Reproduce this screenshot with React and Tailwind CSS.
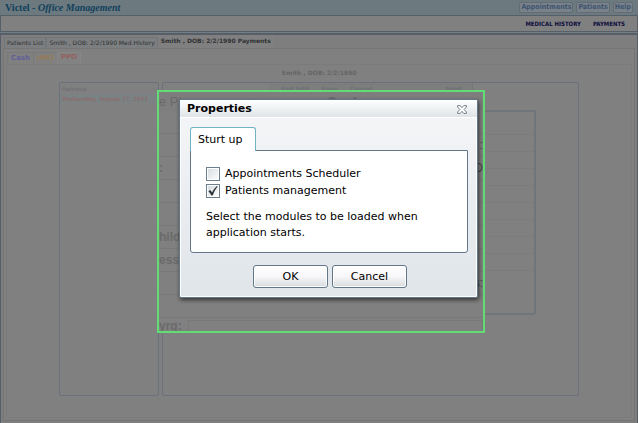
import { useState } from 'react';

const TOP_LINKS = ['Appointments', 'Patients', 'Help'];

const TABS = ['Patients List', 'Smith , DOB: 2/2/1990 Med.History'];

const FORM_ROWS = [
  { id: 1, left: '', right: '' },
  { id: 2, left: '', right: ':' },
  { id: 3, left: ':', right: 'D' },
  { id: 4, left: '', right: '' },
  { id: 5, left: '', right: '' },
  { id: 6, left: 'hild', right: '' },
  { id: 7, left: 'ess:', right: '' },
  { id: 8, left: '', right: 's:' },
  { id: 9, left: '', right: '' },
];

function Header() {
  return (
    <header className="font-['DejaVu_Sans_Condensed','DejaVu_Sans',sans-serif]">
      <div className="flex h-[15px] items-center justify-between bg-[#6c797f] px-[5px]">
        <h1 className="font-['Liberation_Serif',serif] text-[10px] leading-none font-bold text-[#103f5c]">
          Victel - <em>Office Management</em>
        </h1>
        <nav className="flex gap-[3px]">
          {TOP_LINKS.map(label => (
            <a
              key={label}
              href="#"
              className="rounded-xs border border-[#626c76] bg-[#788288] px-px text-[7px] leading-[9px] font-bold text-[#3f5472]"
            >
              {label}
            </a>
          ))}
        </nav>
      </div>
      <nav className="flex h-[17px] items-center justify-end gap-3 border border-[#545f69] bg-[#808080] pr-3 text-[6px] font-bold text-[#0c0c3c]">
        <a href="#">MEDICAL HISTORY</a>
        <a href="#">PAYMENTS</a>
      </nav>
    </header>
  );
}

function VisitList() {
  return (
    <section className="w-[100px] rounded-xs border border-[#6a717d] text-[6px] leading-none">
      <div className="flex h-[11px] items-center justify-between px-0.5 text-[#6b6c6f]">
        <button>Remove</button>
        <span className="text-[#70757d]">::</span>
      </div>
      <div className="flex h-[9px] items-center overflow-hidden bg-[#7a8284] px-0.5 font-['DejaVu_Serif_Condensed','DejaVu_Serif',serif] font-bold whitespace-nowrap text-[#8e6b6d]">
        Wednesday, August 17, 2011
      </div>
    </section>
  );
}

function PaymentForm() {
  return (
    <section className="flex-1 rounded-xs border border-[#6a717d] pr-[42px]">
      <div className="mr-[63px] ml-[106px] flex h-[12px] items-center gap-3 border-r border-[#767676] bg-[#7d7d7d] pl-3 text-[6px] leading-none font-semibold text-[#6c7176]">
        <button>End Edit</button>
        <button>Save</button>
        <button>Cancel</button>
        <button className="mr-2.5 ml-auto">Print</button>
      </div>
      <div className="mt-[15px] ml-[42px] h-[205px] rounded-xs border-2 border-[#70747b] pt-[22px]">
        {FORM_ROWS.map(row => (
          <div key={row.id} className="h-[17px] border-t border-[#7c7c7c]" />
        ))}
      </div>
    </section>
  );
}

function Workspace() {
  return (
    <main className="mt-px flex grow flex-col border-x border-t-2 border-[#545f69] bg-[#7e7e7e] px-0.5 pb-0.5">
      <div className="flex h-[13px] items-stretch pl-px text-[6px] leading-none text-[#2f3234]">
        {TABS.map(tab => (
          <button key={tab} className="mt-0.5 border-x border-t border-[#727679] bg-[#7c7e80] px-0.5 whitespace-nowrap">
            {tab}
          </button>
        ))}
        <button className="bg-[#808080] px-[3px] pb-0.5 font-bold whitespace-nowrap text-[#303234]">
          Smith , DOB: 2/2/1990 Payments
        </button>
      </div>
      <div className="flex grow flex-col border border-[#757575] bg-[#808080] px-0.5 pt-[3px] pb-0.5">
        <div className="flex h-[12px] pl-px text-[7px] leading-none font-bold">
          <button className="border border-b-0 border-[#797979] px-[3px] text-[#5f5f98]">Cash</button>
          <button className="border-t border-[#797979] px-[3px] font-normal text-[#a07840]">HMO</button>
          <button className="border border-b-0 border-[#868686] bg-[#828282] px-[3px] pb-0.5 text-[#94605f]">PPO</button>
        </div>
        <div className="flex grow flex-col border border-[#7b7b7b]">
          <h2 className="pt-1 text-center text-[6px] leading-[8px] font-bold text-[#656565]">
            Smith , DOB: 2/2/1990
          </h2>
          <div className="mx-[52px] mt-[5px] mb-[21px] flex grow gap-[3px]">
            <VisitList />
            <PaymentForm />
          </div>
        </div>
      </div>
    </main>
  );
}

// enlarged part of the form behind the dialog
function FormBackground() {
  return (
    <div className="absolute inset-0 overflow-hidden bg-[#808080] font-['Liberation_Sans',sans-serif] text-[12px] leading-none font-bold text-[#6a6a6a]">
      <div className="flex h-[19px] items-center bg-[#7e7e7e] text-[13px]">
        <span className="w-[168px] font-medium">e Ph</span>
        <span>Card</span>
      </div>
      {FORM_ROWS.map(row => (
        <div key={row.id} className="flex h-[23px] items-center justify-between border-b border-[#797979]">
          <span>{row.left}</span>
          <span className="font-normal text-[#444444]">{row.right}</span>
        </div>
      ))}
      <div className="flex gap-1.5 pt-0.5">
        <span>yrg:</span>
        <span className="h-5 grow border border-[#797979]" />
      </div>
    </div>
  );
}

function CheckOption({ id, label, checked, onChange }) {
  return (
    <div className="flex h-[17px] items-center gap-[5px]">
      <span className="relative h-[14px] w-[14px]">
        <input
          id={id}
          type="checkbox"
          checked={checked}
          onChange={e => onChange(e.target.checked)}
          className="block h-[14px] w-[14px] appearance-none border border-[#6b7f8f] bg-linear-to-br from-[#d3dade] to-white shadow-[inset_0_0_0_1px_white]"
        />
        {checked && (
          <svg viewBox="0 0 14 14" className="pointer-events-none absolute inset-0 h-[14px] w-[14px]">
            <path d="M2.4 7.2 4.3 6 6 8.6C7.3 5.9 8.8 3.8 11 1.9l.7.5C9.5 5 8 7.8 6.9 11.2L5.3 11.6C4.6 9.9 3.7 8.4 2.4 7.2Z" fill="#2a3138" />
          </svg>
        )}
      </span>
      <label htmlFor={id}>{label}</label>
    </div>
  );
}

function PropertiesDialog() {
  const [scheduler, setScheduler] = useState(false);
  const [patients, setPatients] = useState(true);

  const buttonClass =
    'h-[23px] w-[75px] rounded-[3px] border border-[#62788a] bg-linear-to-b from-white via-[#f7f7f9] to-[#d8dade] shadow-[inset_0_0_0_1px_white]';

  return (
    <div
      role="dialog"
      aria-labelledby="properties-title"
      className="relative w-[299px] rounded-xs border border-[#62788a] bg-linear-to-b from-[#f5f6f8] to-[#e0e5e9] text-[11px] leading-4 text-black shadow-[1px_2px_4px_rgba(0,0,0,0.6),inset_0_0_0_1px_white]"
    >
      <div className="flex h-[18px] items-center justify-between border-b border-white bg-linear-to-b from-white to-[#dfe4e7] pt-px pr-2.5 pl-[7px]">
        <h2 id="properties-title" className="font-bold">Properties</h2>
        <button aria-label="Close">
          <svg viewBox="0 0 10 9" className="h-[9px] w-[10px]" fill="white" stroke="#69727a" strokeWidth="0.9">
            <path d="M.6.6H3.2L5 2.7 6.8.6H9.4V2L7.1 4.5 9.4 7V8.4H6.8L5 6.3 3.2 8.4H.6V7L2.9 4.5.6 2Z" />
          </svg>
        </button>
      </div>
      <div className="pt-[9px] pr-[9px] pb-[9px] pl-2.5">
        <div role="tablist" className="flex">
          <button
            role="tab"
            aria-selected="true"
            className="relative -mb-px h-6 rounded-t-[3px] border border-b-0 border-[#6fb3c4] bg-white pr-3 pl-[7px]"
          >
            Sturt up
          </button>
        </div>
        <div className="rounded-b-[3px] border border-[#62788a] bg-white px-[15px] pt-3.5 pb-[11px]">
          <CheckOption id="scheduler" label="Appointments Scheduler" checked={scheduler} onChange={setScheduler} />
          <CheckOption id="patients" label="Patients management" checked={patients} onChange={setPatients} />
          <p className="mt-2.5">
            Select the modules to be loaded when application starts.
          </p>
        </div>
        <div className="mt-3 flex justify-center gap-1 pl-0.5">
          <button className={buttonClass}>OK</button>
          <button className={buttonClass}>Cancel</button>
        </div>
      </div>
    </div>
  );
}

export default function App() {
  return (
    <div className="relative flex min-h-screen flex-col bg-white pr-px font-['DejaVu_Sans',Verdana,sans-serif]">
      <div className="flex grow flex-col bg-[#737d82]">
        <Header />
        <Workspace />
      </div>

      <div className="absolute inset-0 flex items-center justify-center pl-[3px]">
        <div className="relative h-[243px] w-[328px] border-2 border-[#61dd74] pt-[7px] pl-5">
          <FormBackground />
          <PropertiesDialog />
        </div>
      </div>
    </div>
  );
}
